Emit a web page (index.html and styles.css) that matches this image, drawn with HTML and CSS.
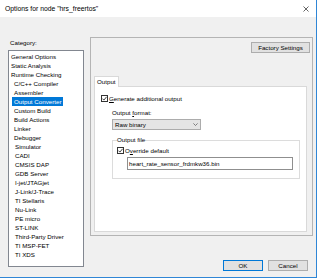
FILE: index.html
```html
<!DOCTYPE html>
<html lang="en">
<head>
    <meta charset="UTF-8">
    <title>Options for node "hrs_freertos"</title>
    <link rel="stylesheet" href="styles.css">
</head>
<body>
    <div class="window">
        <div class="titlebar">
            <span class="title">Options for node "hrs_freertos"</span>
            <svg class="close" width="6" height="6" viewBox="0 0 6 6"><path d="M0.5 0.5 L5.5 5.5 M5.5 0.5 L0.5 5.5" stroke="#222" stroke-width="0.7" fill="none"/></svg>
        </div>

        <div class="client">
            <div class="category">
                <div class="category-label">Category:</div>
                <ul class="tree">
                    <li><span>General Options</span></li>
                    <li><span>Static Analysis</span></li>
                    <li><span>Runtime Checking</span></li>
                    <li class="child"><span>C/C++ Compiler</span></li>
                    <li class="child"><span>Assembler</span></li>
                    <li class="child selected"><span>Output Converter</span></li>
                    <li class="child"><span>Custom Build</span></li>
                    <li class="child"><span>Build Actions</span></li>
                    <li class="child"><span>Linker</span></li>
                    <li class="child"><span>Debugger</span></li>
                    <li class="child2"><span>Simulator</span></li>
                    <li class="child2"><span>CADI</span></li>
                    <li class="child2"><span>CMSIS DAP</span></li>
                    <li class="child2"><span>GDB Server</span></li>
                    <li class="child2"><span>I-jet/JTAGjet</span></li>
                    <li class="child2"><span>J-Link/J-Trace</span></li>
                    <li class="child2"><span>TI Stellaris</span></li>
                    <li class="child2"><span>Nu-Link</span></li>
                    <li class="child2"><span>PE micro</span></li>
                    <li class="child2"><span>ST-LINK</span></li>
                    <li class="child2"><span>Third-Party Driver</span></li>
                    <li class="child2"><span>TI MSP-FET</span></li>
                    <li class="child2"><span>TI XDS</span></li>
                </ul>
            </div>

            <div class="right">
                <div class="panel">
                    <div class="panel-top">
                        <button class="btn btn-factory">Factory Settings</button>
                    </div>
                    <div class="tabs">
                        <span class="tab">Output</span>
                    </div>
                    <div class="tab-page">
                        <div class="check-row first-check">
                            <span class="checkbox"><svg width="5" height="5" viewBox="0 0 5 5"><path d="M0.4 2.6 L1.9 4.1 L4.6 0.8" stroke="#111" stroke-width="0.8" fill="none"/></svg></span>
                            <span><u>G</u>enerate additional output</span>
                        </div>
                        <div class="field-label">Output <u>f</u>ormat:</div>
                        <div class="select">
                            <span>Raw binary</span>
                            <svg width="5" height="3" viewBox="0 0 5 3"><path d="M0.4 0.4 L2.5 2.5 L4.6 0.4" stroke="#555" stroke-width="0.7" fill="none"/></svg>
                        </div>
                        <fieldset class="group">
                            <legend>Output file</legend>
                            <div class="check-row">
                                <span class="checkbox"><svg width="5" height="5" viewBox="0 0 5 5"><path d="M0.4 2.6 L1.9 4.1 L4.6 0.8" stroke="#111" stroke-width="0.8" fill="none"/></svg></span>
                                <span>O<u>v</u>erride default</span>
                            </div>
                            <div class="text-input">heart_rate_sensor_frdmkw36.bin</div>
                        </fieldset>
                    </div>
                </div>
                <div class="buttons">
                    <button class="btn btn-default">OK</button>
                    <button class="btn">Cancel</button>
                </div>
            </div>
        </div>
    </div>
</body>
</html>
```

FILE: styles.css
```css
/* Reset */
body {
    margin: 0;
    padding: 0;
    font-family: "Liberation Sans", Arial, sans-serif;
    font-size: 6.2px;
    color: #000;
    background-color: #fff;
}

/* Dialog window */
.window {
    width: 316px;
    height: 277px;
    border-right: 1px solid #2f86d6;
    border-bottom: 1px solid #2f86d6;
    background-color: #f0f0f0;
    display: flex;
    flex-direction: column;
}

.titlebar {
    height: 17px;
    flex-shrink: 0;
    background-color: #fff;
    display: flex;
    align-items: center;
    justify-content: space-between;
    padding: 0 7px 0 5px;
    font-size: 6.8px;
}

.client {
    flex: 1;
    display: flex;
    gap: 6px;
    padding: 0 3px 0 8px;
}

/* Category tree */
.category {
    width: 76px;
    display: flex;
    flex-direction: column;
    padding: 21px 0 10px;
}

.category-label {
    line-height: 9px;
    padding-left: 2px;
}

.tree {
    flex: 1;
    list-style: none;
    margin: 3px 0 0;
    padding: 1px 0 0;
    background-color: #fff;
    border: 1px solid #828790;
}

.tree li {
    height: 9px;
    line-height: 9px;
    white-space: nowrap;
}

.tree li span {
    display: inline-block;
    padding: 0 2px;
}

.tree li.child {
    padding-left: 3px;
}

.tree li.child2 {
    padding-left: 4px;
}

.tree li.selected span {
    background-color: #0078d7;
    color: #fff;
}

/* Options panel */
.right {
    flex: 1;
    display: flex;
    flex-direction: column;
}

.panel {
    margin-top: 20px;
    height: 199px;
    box-sizing: border-box;
    border: 1px solid #b4b4b4;
    display: flex;
    flex-direction: column;
    padding: 4px 2px 3px 3px;
}

.panel-top {
    display: flex;
    justify-content: flex-end;
}

.btn {
    font: inherit;
    height: 11px;
    width: 40px;
    padding: 0;
    line-height: 9px;
    color: #000;
    background-color: #e1e1e1;
    border: 1px solid #adadad;
}

.btn-factory {
    width: 59px;
}

.btn-default {
    border-color: #0078d7;
}

.tabs {
    display: flex;
    margin-top: 23px;
}

.tab {
    position: relative;
    z-index: 1;
    height: 11px;
    box-sizing: border-box;
    line-height: 9px;
    padding: 0 2px;
    margin-bottom: -1px;
    background-color: #fff;
    border: 1px solid #d9d9d9;
    border-bottom: none;
}

.tab-page {
    flex: 1;
    margin-right: 3px;
    background-color: #fff;
    border: 1px solid #d9d9d9;
}

.check-row {
    display: flex;
    align-items: center;
    line-height: 9px;
}

.first-check {
    margin: 7px 0 0 6px;
}

.checkbox {
    width: 7px;
    height: 7px;
    box-sizing: border-box;
    border: 1px solid #333;
    background-color: #fff;
    margin-right: 1px;
    display: flex;
    align-items: center;
    justify-content: center;
}

.checkbox svg {
    display: block;
}

.field-label {
    line-height: 9px;
    margin: 5px 0 0 17px;
}

.select {
    width: 89px;
    height: 11px;
    box-sizing: border-box;
    margin: 2px 0 0 17px;
    padding: 0 2px 0 2px;
    background-color: #e5e5e5;
    border: 1px solid #acacac;
    display: flex;
    align-items: center;
    justify-content: space-between;
}

.group {
    margin: 6px 6px 0 17px;
    padding: 2px 4px 8px;
    border: 1px solid #dcdcdc;
}

.group legend {
    padding: 0;
    line-height: 8px;
}

.text-input {
    width: 166px;
    height: 13px;
    box-sizing: border-box;
    margin: 2px 0 0 10px;
    padding-left: 1px;
    line-height: 11px;
    border: 1px solid #8f8f8f;
    background-color: #fff;
}

.buttons {
    display: flex;
    justify-content: flex-end;
    gap: 5px;
    margin-top: 24px;
    padding-right: 5px;
}
```
